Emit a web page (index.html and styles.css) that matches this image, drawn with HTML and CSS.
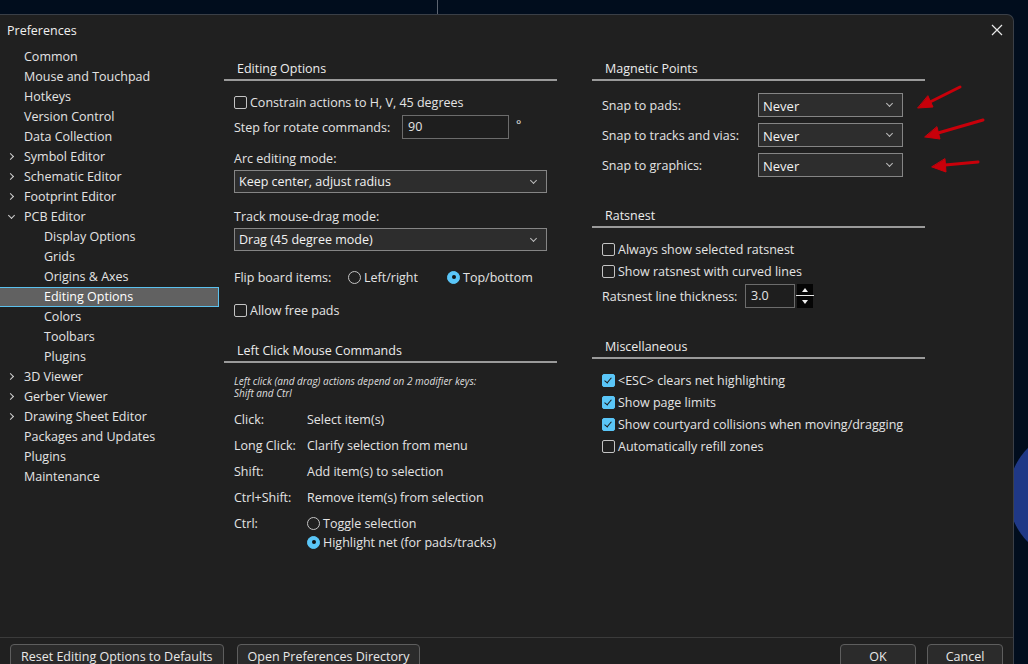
FILE: index.html
```html
<!DOCTYPE html>
<html lang="en">
<head>
    <meta charset="UTF-8">
    <title>Preferences</title>
    <link rel="stylesheet" href="styles.css">
</head>
<body>
    <div class="desk-line"></div>
    <div class="desk-blob"></div>

    <div class="dialog">
        <div class="titlebar">
            <span class="title">Preferences</span>
            <svg class="close" width="12" height="12" viewBox="0 0 12 12"><path d="M1 1L11 11M11 1L1 11" stroke="#e8e8e8" stroke-width="1.2"/></svg>
        </div>

        <div class="main">
            <ul class="tree">
                <li class="node"><span class="tw"></span>Common</li>
                <li class="node"><span class="tw"></span>Mouse and Touchpad</li>
                <li class="node"><span class="tw"></span>Hotkeys</li>
                <li class="node"><span class="tw"></span>Version Control</li>
                <li class="node"><span class="tw"></span>Data Collection</li>
                <li class="node"><span class="tw closed"></span>Symbol Editor</li>
                <li class="node"><span class="tw closed"></span>Schematic Editor</li>
                <li class="node"><span class="tw closed"></span>Footprint Editor</li>
                <li class="node"><span class="tw open"></span>PCB Editor</li>
                <li class="node child">Display Options</li>
                <li class="node child">Grids</li>
                <li class="node child">Origins &amp; Axes</li>
                <li class="node child selected">Editing Options</li>
                <li class="node child">Colors</li>
                <li class="node child">Toolbars</li>
                <li class="node child">Plugins</li>
                <li class="node"><span class="tw closed"></span>3D Viewer</li>
                <li class="node"><span class="tw closed"></span>Gerber Viewer</li>
                <li class="node"><span class="tw closed"></span>Drawing Sheet Editor</li>
                <li class="node"><span class="tw"></span>Packages and Updates</li>
                <li class="node"><span class="tw"></span>Plugins</li>
                <li class="node"><span class="tw"></span>Maintenance</li>
            </ul>

            <div class="page">
                <!-- left column -->
                <div class="col">
                    <div class="sec-head">Editing Options</div>
                    <div class="sec-body">
                        <div class="line constrain"><span class="cb"></span>Constrain actions to H, V, 45 degrees</div>
                        <div class="line step">
                            <span class="step-label">Step for rotate commands:</span>
                            <span class="field step-field">90</span>
                            <span class="unit">°</span>
                        </div>
                        <div class="line arc-label">Arc editing mode:</div>
                        <div class="combo wide">Keep center, adjust radius<span class="chev"></span></div>
                        <div class="line track-label">Track mouse-drag mode:</div>
                        <div class="combo wide">Drag (45 degree mode)<span class="chev"></span></div>
                        <div class="line flip">
                            <span class="flip-label">Flip board items:</span>
                            <span class="rb"></span><span class="opt-lr">Left/right</span>
                            <span class="rb on"></span>Top/bottom
                        </div>
                        <div class="line freepads"><span class="cb"></span>Allow free pads</div>
                    </div>

                    <div class="sec-head mouse-head">Left Click Mouse Commands</div>
                    <div class="sec-body">
                        <div class="note">Left click (and drag) actions depend on 2 modifier keys:<br>Shift and Ctrl</div>
                        <div class="cmd first"><span class="key">Click:</span>Select item(s)</div>
                        <div class="cmd"><span class="key">Long Click:</span>Clarify selection from menu</div>
                        <div class="cmd"><span class="key">Shift:</span>Add item(s) to selection</div>
                        <div class="cmd"><span class="key">Ctrl+Shift:</span>Remove item(s) from selection</div>
                        <div class="cmd"><span class="key">Ctrl:</span><span class="rb"></span>Toggle selection</div>
                        <div class="cmd sub"><span class="key"></span><span class="rb on"></span>Highlight net (for pads/tracks)</div>
                    </div>
                </div>

                <!-- right column -->
                <div class="col">
                    <div class="sec-head">Magnetic Points</div>
                    <div class="sec-body">
                        <div class="snap first"><span class="snap-label">Snap to pads:</span><span class="combo short">Never<span class="chev"></span></span></div>
                        <div class="snap"><span class="snap-label">Snap to tracks and vias:</span><span class="combo short">Never<span class="chev"></span></span></div>
                        <div class="snap"><span class="snap-label">Snap to graphics:</span><span class="combo short">Never<span class="chev"></span></span></div>
                    </div>

                    <div class="sec-head gap-head">Ratsnest</div>
                    <div class="sec-body">
                        <div class="line chk first"><span class="cb"></span>Always show selected ratsnest</div>
                        <div class="line chk"><span class="cb"></span>Show ratsnest with curved lines</div>
                        <div class="line thick">
                            <span class="thick-label">Ratsnest line thickness:</span>
                            <span class="field thick-field">3.0</span>
                            <span class="spin"><span class="up"></span><span class="dn"></span></span>
                        </div>
                    </div>

                    <div class="sec-head gap-head">Miscellaneous</div>
                    <div class="sec-body">
                        <div class="line chk first"><span class="cb on"></span>&lt;ESC&gt; clears net highlighting</div>
                        <div class="line chk"><span class="cb on"></span>Show page limits</div>
                        <div class="line chk"><span class="cb on"></span>Show courtyard collisions when moving/dragging</div>
                        <div class="line chk"><span class="cb"></span>Automatically refill zones</div>
                    </div>
                </div>
            </div>
        </div>

        <div class="footer">
            <button class="btn">Reset Editing Options to Defaults</button>
            <button class="btn">Open Preferences Directory</button>
            <button class="btn ok">OK</button>
            <button class="btn">Cancel</button>
        </div>
    </div>

    <!-- red annotation arrows drawn over the screenshot -->
    <svg class="annot" width="1028" height="664" viewBox="0 0 1028 664">
        <g stroke="#c8000a" stroke-width="3" stroke-linecap="round" fill="#c8000a">
            <line x1="960" y1="87" x2="930" y2="102"/>
            <polygon points="918,108 933,107 928,96" stroke-width="1"/>
            <line x1="983" y1="120" x2="938" y2="133"/>
            <polygon points="925,137 940,139 937,127" stroke-width="1"/>
            <line x1="978" y1="162" x2="945" y2="165"/>
            <polygon points="932,167 946,172 945,159" stroke-width="1"/>
        </g>
    </svg>
</body>
</html>
```

FILE: styles.css
```css
body {
    margin: 0;
    width: 1028px;
    height: 664px;
    overflow: hidden;
    position: relative;
    background: #010d1d;
    font-family: "Open Sans", "Noto Sans", sans-serif;
    font-size: 12.5px;
    color: #e4e4e4;
}

/* desktop bits peeking around the dialog */
.desk-line {
    position: absolute;
    left: 437px;
    top: 0;
    width: 1px;
    height: 14px;
    background: #5d6470;
}
.desk-blob {
    position: absolute;
    left: 1014px;
    top: 447px;
    width: 14px;
    height: 98px;
    background: radial-gradient(circle at 61px 48px, #1f3886 66px, transparent 67px);
}

.dialog {
    position: relative;
    margin-top: 14px;
    width: 1014px;
    height: 650px;
    overflow: hidden;
    box-sizing: border-box;
    background: #202020;
    border-top: 1px solid #3a3f47;
    border-right: 1px solid #3a3f47;
    border-top-right-radius: 7px;
    display: flex;
    flex-direction: column;
}

.titlebar {
    height: 30px;
    flex: none;
    display: flex;
    align-items: center;
    justify-content: space-between;
    padding: 0 10px 2px 7px;
}
.title {
    font-size: 12.5px;
    color: #f0f0f0;
}

.main {
    height: 590px;
    flex: none;
    display: flex;
}

/* tree */
.tree {
    list-style: none;
    margin: 0;
    padding: 0;
    width: 220px;
    flex: none;
}
.node {
    height: 20px;
    line-height: 20px;
    display: flex;
    align-items: center;
    white-space: nowrap;
}
.node.child {
    padding-left: 44px;
}
.node.selected {
    margin-right: 1px;
    height: 18px;
    background: #616161;
    border: 1px solid #5bc1ee;
    border-left: none;
    color: #fff;
}
.tw {
    width: 24px;
    height: 20px;
    flex: none;
    position: relative;
}
.tw.closed::after,
.tw.open::after {
    content: "";
    position: absolute;
    width: 4px;
    height: 4px;
    border-right: 1.5px solid #d0d0d0;
    border-bottom: 1.5px solid #d0d0d0;
}
.tw.closed::after {
    left: 8px;
    top: 7px;
    transform: rotate(-45deg);
}
.tw.open::after {
    left: 9px;
    top: 6px;
    transform: rotate(45deg);
}

/* settings page */
.page {
    display: flex;
    gap: 35px;
    padding: 12px 0 0 4px;
}
.col {
    width: 333px;
}
.sec-head {
    line-height: 20px;
    padding-left: 13px;
    border-bottom: 2px solid #9a9a9a;
    color: #ececec;
}
.sec-body {
    padding-left: 10px;
}
.mouse-head {
    margin-top: 21px;
}
.gap-head {
    margin-top: 29px;
}

.line {
    display: flex;
    align-items: center;
    height: 20px;
    white-space: nowrap;
}
.constrain { margin-top: 11px; }
.step { height: 24px; margin-top: 3px; }
.arc-label { margin-top: 9px; }
.track-label { margin-top: 13px; }
.flip { margin-top: 16px; }
.freepads { margin-top: 13px; }

.step-label { width: 168px; }
.unit { margin-left: 7px; margin-top: -6px; }
.flip-label { width: 114px; }
.opt-lr { width: 83px; }

.field {
    box-sizing: border-box;
    height: 24px;
    line-height: 22px;
    border: 1px solid #6c6c6c;
    background: #1e1e1e;
    padding-left: 5px;
}
.step-field { width: 107px; }

.combo {
    position: relative;
    display: block;
    box-sizing: border-box;
    background: #2d2d2d;
    border: 1px solid #858585;
    padding-left: 4px;
    color: #f2f2f2;
}
.combo.wide {
    width: 313px;
    height: 23px;
    line-height: 21px;
    margin-top: 2px;
}
.combo.short {
    width: 145px;
    height: 24px;
    line-height: 24px;
    font-size: 13px;
}
.chev {
    position: absolute;
    right: 10px;
    top: 7px;
    width: 4px;
    height: 4px;
    border-right: 1px solid #bcbcbc;
    border-bottom: 1px solid #bcbcbc;
    transform: rotate(45deg);
}

/* checkbox and radio */
.cb {
    width: 13px;
    height: 13px;
    box-sizing: border-box;
    border: 1px solid #c4c4c4;
    border-radius: 2px;
    margin-right: 3px;
    flex: none;
    position: relative;
}
.cb.on {
    background: #5ac6f8;
    border-color: #5ac6f8;
}
.cb.on::after {
    content: "";
    position: absolute;
    left: 3px;
    top: 1px;
    width: 3px;
    height: 6px;
    border-right: 1px solid #1b1b1b;
    border-bottom: 1px solid #1b1b1b;
    transform: rotate(40deg);
}
.rb {
    width: 13px;
    height: 13px;
    box-sizing: border-box;
    border: 1px solid #c4c4c4;
    border-radius: 50%;
    margin-right: 3px;
    flex: none;
    position: relative;
}
.rb.on {
    background: #5ac6f8;
    border-color: #5ac6f8;
}
.rb.on::after {
    content: "";
    position: absolute;
    left: 3.5px;
    top: 3.5px;
    width: 4px;
    height: 4px;
    border-radius: 50%;
    background: #111;
}

/* mouse commands */
.note {
    margin-top: 12px;
    font-size: 10px;
    line-height: 12px;
    font-style: italic;
    color: #dedede;
}
.cmd {
    display: flex;
    align-items: center;
    height: 20px;
    margin-top: 6px;
    white-space: nowrap;
}
.cmd.first { margin-top: 10px; }
.cmd.sub { margin-top: -1px; }
.key {
    width: 73px;
    flex: none;
}

/* right column */
.snap {
    display: flex;
    align-items: center;
    margin-top: 6px;
}
.snap.first { margin-top: 12px; }
.snap-label { width: 156px; flex: none; }

.chk { margin-top: 2px; }
.chk.first { margin-top: 11px; }
.thick { height: 24px; margin-top: 3px; }
.thick-label { width: 143px; }
.thick-field { width: 50px; }
.spin {
    width: 16px;
    height: 24px;
    margin-left: 2px;
    background: #050505;
    display: flex;
    flex-direction: column;
    justify-content: space-between;
    align-items: center;
    position: relative;
}
.spin::before {
    content: "";
    position: absolute;
    left: -1px;
    right: -1px;
    top: 11px;
    height: 1px;
    background: #e6e6e6;
}
.up, .dn {
    width: 0;
    height: 0;
    border-left: 3px solid transparent;
    border-right: 3px solid transparent;
}
.up { border-bottom: 4px solid #eee; margin-top: 4px; }
.dn { border-top: 4px solid #eee; margin-bottom: 4px; }

/* footer buttons */
.footer {
    border-top: 1px solid #3b3b3b;
    display: flex;
    gap: 13px;
    padding: 6px 10px 0 10px;
}
.btn {
    height: 26px;
    flex: none;
    padding: 0 10px 2px;
    font-family: inherit;
    font-size: 12.5px;
    color: #e8e8e8;
    background: #2b2b2b;
    border: 1px solid #5e5e5e;
    border-radius: 4px;
}
.btn.ok {
    margin-left: auto;
    width: 76px;
}
.btn.ok + .btn {
    width: 76px;
    margin-left: -2px;
}

.annot {
    position: absolute;
    left: 0;
    top: 0;
    pointer-events: none;
}
```
